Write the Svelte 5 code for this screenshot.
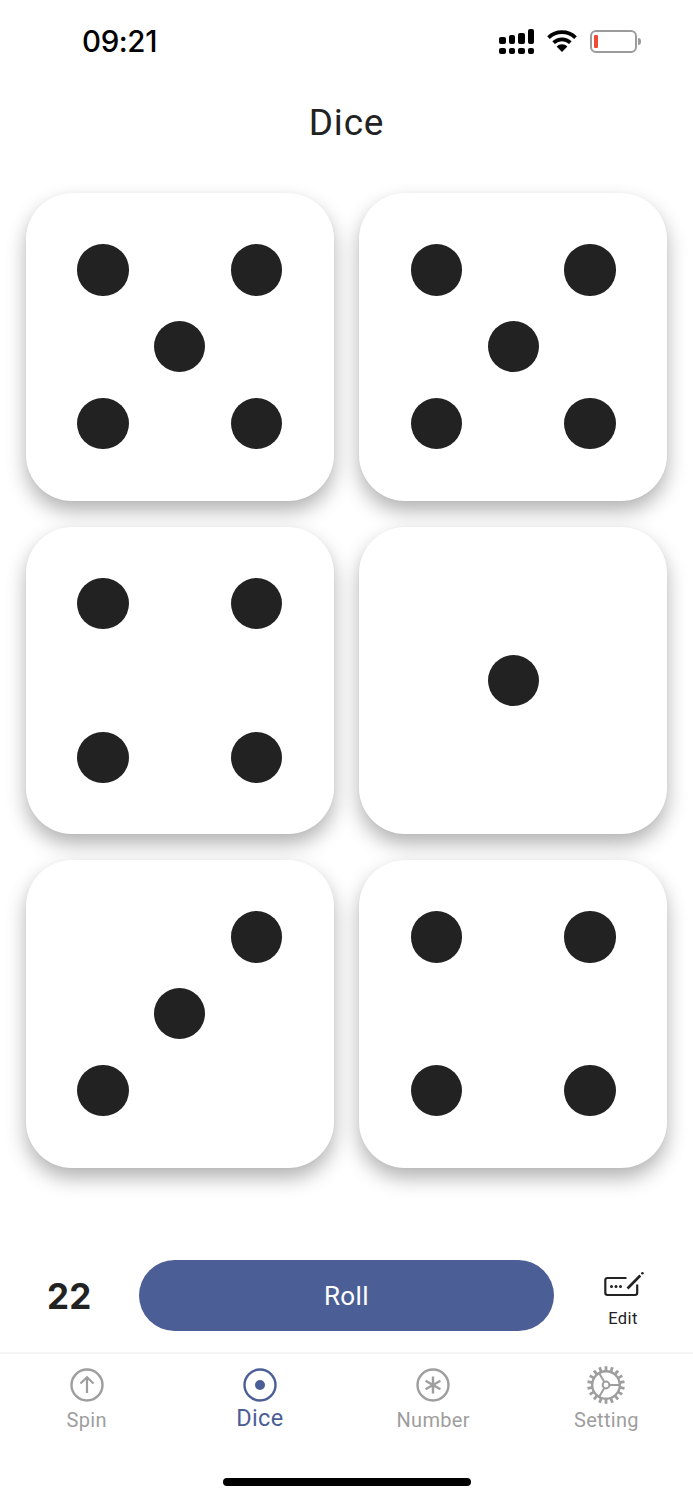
<script>
  const dice = [
    [0, 2, 4, 6, 8],
    [0, 2, 4, 6, 8],
    [0, 2, 6, 8],
    [4],
    [2, 4, 6],
    [0, 2, 6, 8]
  ];
  const cells = [0, 1, 2, 3, 4, 5, 6, 7, 8];
  const bars = [
    { h: 7 },
    { h: 9 },
    { h: 11 },
    { h: 15 }
  ];
  const teeth = Array.from({ length: 18 }, (_, i) => i * 20);
</script>

<div class="page">
  <header class="status">
    <span class="time">09:21</span>
    <div class="status-icons">
      <div class="signal">
        {#each bars as bar}
          <div class="signal-col">
            <span class="bar-top" style="height: {bar.h}px"></span>
            <span class="bar-dot"></span>
          </div>
        {/each}
      </div>
      <svg class="wifi" width="32" height="24" viewBox="0 0 32 24" aria-hidden="true">
        <path d="M2.5 8.6 A19.5 19.5 0 0 1 29.5 8.6" fill="none" stroke="#000" stroke-width="3.8" />
        <path d="M7.6 13.6 A12.3 12.3 0 0 1 24.4 13.6" fill="none" stroke="#000" stroke-width="3.8" />
        <path d="M16 23 L10.6 17.5 A7.6 7.6 0 0 1 21.4 17.5 Z" fill="#000" />
      </svg>
      <div class="battery">
        <div class="battery-body"><span class="battery-level"></span></div>
        <span class="battery-cap"></span>
      </div>
    </div>
  </header>

  <h1 class="title">Dice</h1>

  <main class="grid">
    {#each dice as pips}
      <div class="die">
        {#each cells as cell}
          <span class="cell" class:pip={pips.includes(cell)}></span>
        {/each}
      </div>
    {/each}
  </main>

  <section class="actions">
    <span class="total">22</span>
    <button class="roll">Roll</button>
    <div class="edit">
      <svg width="40" height="27" viewBox="0 0 40 27" aria-hidden="true">
        <path d="M22.5 7 H3.5 a2.2 2.2 0 0 0 -2.2 2.2 V21.8 a2.2 2.2 0 0 0 2.2 2.2 H31 a2.2 2.2 0 0 0 2.2 -2.2 V13.5" fill="none" stroke="#222" stroke-width="2.2" />
        <circle cx="7.5" cy="15.6" r="1.5" fill="#222" />
        <circle cx="12" cy="15.6" r="1.5" fill="#222" />
        <circle cx="16.5" cy="15.6" r="1.5" fill="#222" />
        <path d="M23.5 17.5 L36.3 4.5" fill="none" stroke="#222" stroke-width="2.6" />
        <circle cx="38.4" cy="2.2" r="1.3" fill="#222" />
      </svg>
      <span class="edit-label">Edit</span>
    </div>
  </section>

  <nav class="tabs">
    <div class="tab">
      <svg width="36" height="36" viewBox="0 0 36 36" aria-hidden="true">
        <circle cx="18" cy="18" r="15.5" fill="none" stroke="#9e9e9e" stroke-width="2.4" />
        <path d="M18 26 V10.5 M11.5 16.5 L18 10.2 L24.5 16.5" fill="none" stroke="#9e9e9e" stroke-width="2.2" />
      </svg>
      <span class="label">Spin</span>
    </div>
    <div class="tab active">
      <svg width="36" height="36" viewBox="0 0 36 36" aria-hidden="true">
        <circle cx="18" cy="18" r="15.5" fill="none" stroke="#4c5e96" stroke-width="2.4" />
        <circle cx="18" cy="18" r="5" fill="#4c5e96" />
      </svg>
      <span class="label">Dice</span>
    </div>
    <div class="tab">
      <svg width="36" height="36" viewBox="0 0 36 36" aria-hidden="true">
        <circle cx="18" cy="18" r="15.5" fill="none" stroke="#9e9e9e" stroke-width="2.4" />
        <path d="M18 9.5 V26.5 M10.6 13.7 L25.4 22.3 M25.4 13.7 L10.6 22.3" fill="none" stroke="#9e9e9e" stroke-width="2.4" />
      </svg>
      <span class="label">Number</span>
    </div>
    <div class="tab">
      <svg class="gear" width="36" height="36" viewBox="0 0 36 36" aria-hidden="true">
        {#each teeth as angle}
          <rect x="16.6" y="-0.8" width="2.8" height="5" fill="#9e9e9e" transform="rotate({angle} 18 18)" />
        {/each}
        <circle cx="18" cy="18" r="13.8" fill="none" stroke="#9e9e9e" stroke-width="2.4" />
        <circle cx="18" cy="18" r="3.4" fill="none" stroke="#9e9e9e" stroke-width="2" />
        <path d="M21.4 18 H32 M16.3 15 L10.9 5.8 M16.3 21 L10.9 30.2" fill="none" stroke="#9e9e9e" stroke-width="2" />
      </svg>
      <span class="label">Setting</span>
    </div>
  </nav>

  <div class="home"></div>
</div>

<style>
  :global(body) {
    margin: 0;
    background: #fff;
  }

  .page {
    width: 693px;
    height: 1500px;
    display: flex;
    flex-direction: column;
    background: #fff;
    overflow: hidden;
    font-family: Inter, "Liberation Sans", sans-serif;
    color: #222;
  }

  .status {
    height: 82px;
    box-sizing: border-box;
    padding: 0 52px 0 82px;
    display: flex;
    justify-content: space-between;
    align-items: center;
  }

  .time {
    font-family: Inter, sans-serif;
    font-size: 29.5px;
    font-weight: 500;
    letter-spacing: -0.4px;
    color: #000;
  }

  .status-icons {
    display: flex;
    align-items: center;
    gap: 12px;
  }

  .signal {
    display: flex;
    align-items: flex-end;
    gap: 3px;
  }

  .signal-col {
    display: flex;
    flex-direction: column;
    gap: 4px;
    width: 6.5px;
  }

  .bar-top,
  .bar-dot {
    display: block;
    background: #000;
    border-radius: 2px;
  }

  .bar-dot {
    height: 6px;
  }

  .wifi {
    display: block;
  }

  .battery {
    display: flex;
    align-items: center;
    gap: 1px;
  }

  .battery-body {
    width: 47px;
    height: 23px;
    box-sizing: border-box;
    border: 2px solid #9b9b9b;
    border-radius: 6px;
    padding: 3px 2px;
    display: flex;
  }

  .battery-level {
    width: 4px;
    background: #ee4a36;
    border-radius: 1px;
  }

  .battery-cap {
    width: 3px;
    height: 7px;
    background: #9b9b9b;
    border-radius: 0 3px 3px 0;
  }

  .title {
    margin: 0;
    height: 111px;
    box-sizing: border-box;
    padding-top: 19px;
    text-align: center;
    font-size: 37px;
    line-height: 44px;
    font-weight: 400;
    letter-spacing: 0.8px;
    font-family: Roboto, sans-serif;
    color: #222;
  }

  .grid {
    display: grid;
    grid-template-columns: 307.5px 307.5px;
    column-gap: 25.9px;
    row-gap: 26px;
    padding: 0 26px;
  }

  .die {
    width: 307.5px;
    height: 307.5px;
    box-sizing: border-box;
    padding: 51.25px;
    display: grid;
    grid-template-columns: repeat(3, 51.25px);
    grid-template-rows: repeat(3, 51.25px);
    gap: 25.625px;
    background: #fff;
    border-radius: 46px;
    box-shadow: 0 10px 20px rgba(0, 0, 0, 0.3), 0 0 3px rgba(0, 0, 0, 0.03);
  }

  .cell {
    border-radius: 50%;
  }

  .pip {
    background: #222;
  }

  .actions {
    margin-top: 92.5px;
    height: 71px;
    display: flex;
    align-items: center;
    position: relative;
    padding-left: 47px;
  }

  .total {
    width: 92px;
    font-size: 35px;
    font-weight: 700;
    letter-spacing: 0.3px;
    font-family: Inter, sans-serif;
    color: #222;
  }

  .roll {
    width: 415px;
    height: 71px;
    border: 0;
    border-radius: 36px;
    background: #4c5e96;
    color: #fff;
    font-family: Roboto, sans-serif;
    font-size: 26px;
    letter-spacing: 0.4px;
    padding: 0;
  }

  .edit {
    width: 138px;
    display: flex;
    flex-direction: column;
    align-items: center;
    color: #222;
  }

  .edit svg {
    display: block;
    margin-top: 9px;
    margin-left: 2px;
  }

  .edit-label {
    margin-top: 11px;
    font-size: 16.5px;
    line-height: 20px;
    font-family: Roboto, sans-serif;
    letter-spacing: 0.4px;
  }

  .tabs {
    margin-top: 21px;
    height: 124px;
    border-top: 2px solid #f5f5f5;
    display: grid;
    grid-template-columns: repeat(4, 1fr);
  }

  .tab {
    display: flex;
    flex-direction: column;
    align-items: center;
    padding-top: 13px;
    color: #9e9e9e;
  }

  .tab svg {
    display: block;
  }

  .gear {
    overflow: visible;
  }

  .label {
    margin-top: 5px;
    font-family: Roboto, sans-serif;
    font-size: 20px;
    line-height: 24px;
    letter-spacing: 0.3px;
  }

  .active {
    color: #4c5e96;
  }

  .active .label {
    margin-top: 1px;
    font-size: 23.5px;
    line-height: 28px;
  }

  .home {
    width: 248px;
    height: 8px;
    margin: 0 auto;
    background: #000;
    border-radius: 4px;
  }
</style>
